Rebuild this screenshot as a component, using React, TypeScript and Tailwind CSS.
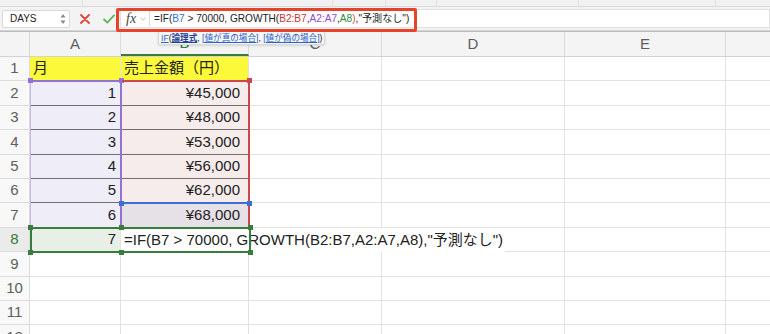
const font = "font-['Liberation_Sans','Noto_Sans_CJK_JP',sans-serif]"

type Cell = {
  text?: string
  align?: 'left' | 'right'
  bg?: string
  line?: string
}

const rows: { n: number; a: Cell; b: Cell }[] = [
  { n: 1, a: { text: '月', align: 'left', bg: 'bg-[#fbf93a]' }, b: { text: '売上金額（円）', align: 'left', bg: 'bg-[#fbf93a]' } },
  { n: 2, a: { text: '1', bg: 'bg-[#efedf8]', line: 'border-b-[#6f6f6f]' }, b: { text: '¥45,000', bg: 'bg-[#f6ecec]', line: 'border-b-[#6f6f6f]' } },
  { n: 3, a: { text: '2', bg: 'bg-[#efedf8]', line: 'border-b-[#6f6f6f]' }, b: { text: '¥48,000', bg: 'bg-[#f6ecec]', line: 'border-b-[#6f6f6f]' } },
  { n: 4, a: { text: '3', bg: 'bg-[#efedf8]', line: 'border-b-[#6f6f6f]' }, b: { text: '¥53,000', bg: 'bg-[#f6ecec]', line: 'border-b-[#6f6f6f]' } },
  { n: 5, a: { text: '4', bg: 'bg-[#efedf8]', line: 'border-b-[#6f6f6f]' }, b: { text: '¥56,000', bg: 'bg-[#f6ecec]', line: 'border-b-[#6f6f6f]' } },
  { n: 6, a: { text: '5', bg: 'bg-[#efedf8]', line: 'border-b-[#6f6f6f]' }, b: { text: '¥62,000', bg: 'bg-[#f6ecec]' } },
  { n: 7, a: { text: '6', bg: 'bg-[#efedf8]' }, b: { text: '¥68,000', bg: 'bg-[#e6e0e7]' } },
  { n: 8, a: { text: '7', bg: 'bg-[#e8efe6]' }, b: {} },
  { n: 9, a: {}, b: {} },
  { n: 10, a: {}, b: {} },
  { n: 11, a: {}, b: {} },
  { n: 12, a: {}, b: {} },
]

function Handle({ className }: { className: string }) {
  return <div className={`absolute w-[5px] h-[5px] ${className}`} />
}

function FormulaBar() {
  return (
    <div className="flex items-center h-[24px] bg-[#f3f3f3] border-b border-[#d4d4d4]">
      <div className="ml-[2px] w-[68px] h-[18px] bg-white border border-[#d9d9d9] rounded-[2px] flex items-center justify-between pl-[7px] pr-[3px]">
        <span className="text-[10px] text-[#222]">DAYS</span>
        <svg width="6" height="12" viewBox="0 0 6 12">
          <path d="M3 1 L5.5 4.5 H0.5 Z" fill="#8a8a8a" />
          <path d="M3 11 L5.5 7.5 H0.5 Z" fill="#8a8a8a" />
        </svg>
      </div>
      <svg className="ml-[10px]" width="10" height="10" viewBox="0 0 10 10">
        <path d="M1 1 L9 9 M9 1 L1 9" stroke="#e0443a" strokeWidth="1.8" strokeLinecap="round" />
      </svg>
      <svg className="ml-[13px]" width="12" height="10" viewBox="0 0 12 10">
        <path d="M1 5.5 L4.3 8.6 L11 1.4" stroke="#5bb55b" strokeWidth="1.8" fill="none" strokeLinecap="round" strokeLinejoin="round" />
      </svg>
      <div className="ml-[5px] flex-1 h-[19px] bg-white border border-[#e0e0e0] flex items-center">
        <span className="ml-[5px] font-['Liberation_Serif',serif] italic text-[14px] text-[#444] leading-none">fx</span>
        <svg className="ml-[4px]" width="6" height="4" viewBox="0 0 6 4">
          <path d="M0.5 0.5 L3 3.3 L5.5 0.5" stroke="#b0b0b0" strokeWidth="0.8" fill="none" />
        </svg>
        <div className="ml-[3px] w-px h-[15px] bg-[#dcdcdc]" />
        <span className="ml-[4px] text-[10.1px] text-[#222] whitespace-nowrap">
          =IF(<span className="text-[#3a6bd1]">B7</span> &gt; 70000, GROWTH(
          <span className="text-[#c8343b]">B2:B7</span>,<span className="text-[#8a4cc8]">A2:A7</span>,
          <span className="text-[#2f8a3a]">A8</span><span className="text-[#d45530]">)</span>,"予測なし")
        </span>
      </div>
    </div>
  )
}

export default function App() {
  return (
    <div className={`relative w-[770px] h-[334px] overflow-hidden bg-white ${font}`}>
      <div className="flex h-[7px] bg-[#f1f1f1] border-b border-[#dadada]">
        <div className="w-[83px] border-r border-[#e2e2e2]" />
        <div className="w-[250px] border-r border-[#e2e2e2]" />
        <div className="w-[53px] border-r border-[#e2e2e2]" />
        <div className="w-[51px] border-r border-[#e2e2e2]" />
        <div className="w-[142px] border-r border-[#e2e2e2]" />
        <div className="w-[137px] border-r border-[#e2e2e2]" />
        <div className="flex-1" />
      </div>
      <FormulaBar />

      <div className="border-t border-[#bdbdbd]">
        <div className="flex h-[25px] bg-[#f4f4f4] border-b border-[#d2d2d2] text-[15px] text-[#5e5e5e]">
          <div className="w-[30px] border-r border-[#d6d6d6]" />
          <div className="w-[91px] border-r border-[#dcdcdc] flex items-center justify-center">A</div>
          <div className="w-[128px] border-r border-[#dcdcdc] border-b-2 border-b-[#3c7a40] flex items-center justify-center text-[#2f7a38]">B</div>
          <div className="w-[133px] border-r border-[#dcdcdc] flex items-center justify-center">C</div>
          <div className="w-[183px] border-r border-[#dcdcdc] flex items-center justify-center">D</div>
          <div className="w-[161px] border-r border-[#dcdcdc] flex items-center justify-center">E</div>
          <div className="flex-1" />
        </div>

        {rows.map((r) => (
          <div key={r.n} className="flex h-[24.4px] text-[15px] text-[#222]">
            <div
              className={`w-[30px] border-r border-b border-[#dcdcdc] flex items-center justify-center ${
                r.n === 8 ? 'bg-[#ebebeb] text-[#2f7a38]' : 'bg-[#f8f8f8] text-[#5e5e5e]'
              }`}
            >
              {r.n}
            </div>
            <div
              className={`w-[91px] border-r border-b border-[#e2e2e2] flex items-center ${r.a.bg ?? ''} ${r.a.line ?? ''} ${
                r.a.align === 'left' ? 'justify-start pl-[3px]' : 'justify-end pr-[4px]'
              }`}
            >
              {r.a.text}
            </div>
            <div
              className={`w-[128px] border-r border-b border-[#e2e2e2] flex items-center whitespace-nowrap ${r.b.bg ?? ''} ${r.b.line ?? ''} ${
                r.b.align === 'left' ? 'justify-start pl-[3px]' : 'justify-end pr-[8px]'
              } ${r.n === 1 ? 'border-[#5c7d4c]' : ''}`}
            >
              {r.b.text}
            </div>
            <div className="w-[133px] border-r border-b border-[#e2e2e2]" />
            <div className="w-[183px] border-r border-b border-[#e2e2e2]" />
            <div className="w-[161px] border-r border-b border-[#e2e2e2]" />
            <div className="flex-1 border-b border-[#e2e2e2]" />
          </div>
        ))}
      </div>

      {/* editing text of B8, overflowing into C/D */}
      <div className="absolute left-[124px] top-[228px] h-[24px] flex items-center bg-white pr-[2px] text-[15px] text-[#222] whitespace-nowrap">
        =IF(B7 &gt; 70000, GROWTH(B2:B7,A2:A7,A8),"予測なし")
      </div>

      {/* reference range highlights */}
      <div className="absolute left-[30px] top-[80px] w-[92px] h-[148px] border-t-2 border-r-2 border-l border-[#9272d4] border-l-[#c4b6e6]" />
      <Handle className="left-[28px] top-[78px] bg-[#9272d4]" />
      <Handle className="left-[119px] top-[78px] bg-[#9272d4]" />
      <div className="absolute left-[122px] top-[80px] w-[128px] h-[148px] border-t-2 border-r-2 border-[#cc4650]" />
      <Handle className="left-[247px] top-[78px] bg-[#cc4650]" />
      <div className="absolute left-[122px] top-[202px] w-[128px] h-[2px] bg-[#3c6fd4]" />
      <Handle className="left-[119px] top-[201px] bg-[#3c6fd4]" />
      <Handle className="left-[247px] top-[201px] bg-[#3c6fd4]" />

      {/* active selection A8:B8 */}
      <div className="absolute left-[30px] top-[227px] w-[221px] h-[26px] border-2 border-[#3a7c3e]" />
      <Handle className="left-[28px] top-[225px] bg-[#3a7c3e]" />
      <Handle className="left-[119px] top-[225px] bg-[#3a7c3e]" />
      <Handle className="left-[248px] top-[225px] bg-[#3a7c3e]" />
      <Handle className="left-[28px] top-[250px] bg-[#3a7c3e]" />
      <Handle className="left-[119px] top-[250px] bg-[#3a7c3e]" />
      <Handle className="left-[248px] top-[250px] bg-[#3a7c3e]" />

      {/* function tooltip */}
      <div className="absolute left-[158px] top-[31px] h-[14px] px-[2px] flex items-center bg-[#f6f6f6] border border-[#d8d8d8] rounded-[2px] shadow-sm text-[8.6px] text-[#222] whitespace-nowrap">
        <span className="text-[#2a62c9] underline">IF</span>(
        <span className="text-[#1d3f9a] font-bold underline">論理式</span>,&nbsp;
        <span className="text-[#2a62c9] underline">[値が真の場合]</span>,&nbsp;
        <span className="text-[#2a62c9] underline">[値が偽の場合]</span>)
      </div>

      {/* annotation box */}
      <div className="absolute left-[116px] top-[8px] w-[301px] h-[24px] border-[3px] border-[#e6432a] rounded-[2px]" />
    </div>
  )
}
